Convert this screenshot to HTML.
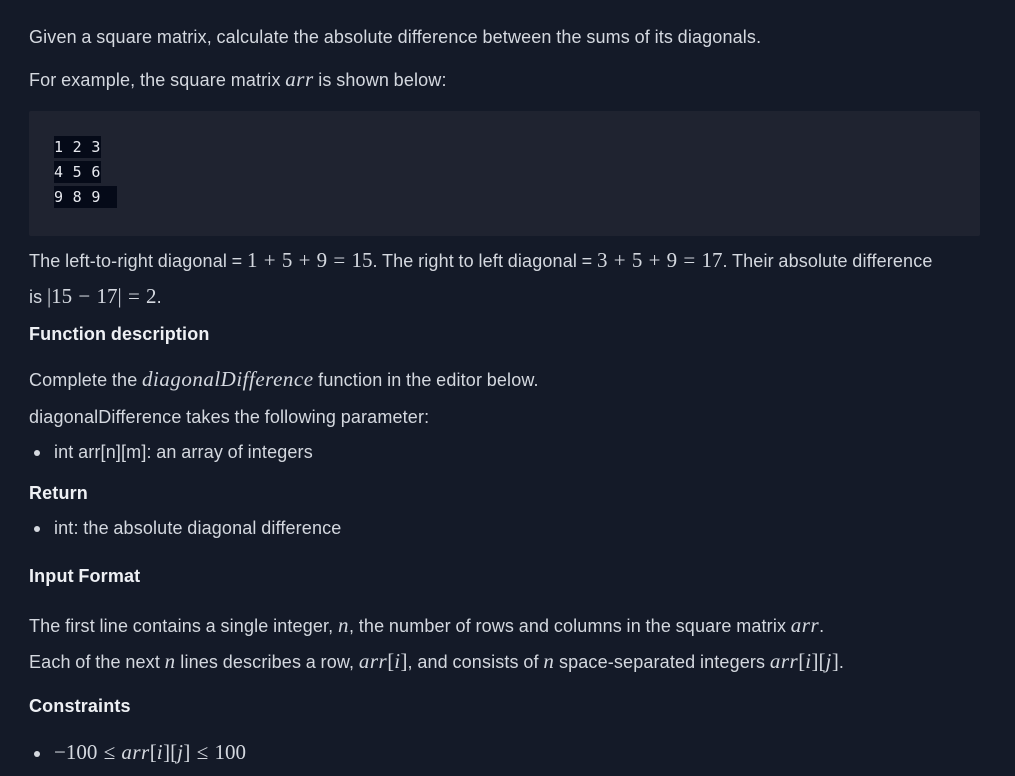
<!DOCTYPE html>
<html><head><meta charset="utf-8"><style>
body{margin:0;background:#141a28;width:1015px;height:776px;overflow:hidden;font-family:"Liberation Sans",sans-serif;color:#d4d8df;font-size:18px}
.l{position:absolute;left:29px;white-space:nowrap;letter-spacing:0.15px;word-spacing:-0.5px}
.m{font-family:"Liberation Serif",serif;font-size:21px;letter-spacing:0;word-spacing:1px}
.i{font-family:"Liberation Serif",serif;font-style:italic;font-size:21px;letter-spacing:0.5px}
b{color:#eef0f4;font-weight:bold}
.code{position:absolute;left:29px;top:111px;width:951px;height:125px;background:#1f2330;border-radius:2px}
.c{position:absolute;left:54px;background:#050a18;font-family:"DejaVu Sans Mono",monospace;font-size:15px;color:#e8eaf0;height:22px;line-height:22px;letter-spacing:0.3px}
.dot{position:absolute;left:34px;width:6px;height:6px;border-radius:50%;background:#d4d8df}
</style></head><body>
<div class="l" style="top:27px">Given a square matrix, calculate the absolute difference between the sums of its diagonals.</div>
<div class="l" style="top:67px">For example, the square matrix <span class="i">arr</span> is shown below:</div>
<div class="code"></div>
<div class="c" style="top:136px;width:47px">1 2 3</div>
<div class="c" style="top:161px;width:47px">4 5 6</div>
<div class="c" style="top:186px;width:63px">9 8 9</div>
<div class="l" style="top:248px">The left-to-right diagonal = <span class="m">1 + 5 + 9 = 15</span>. The right to left diagonal = <span class="m">3 + 5 + 9 = 17</span>. Their absolute difference</div>
<div class="l" style="top:284px">is <span class="m">|15 − 17| = 2</span>.</div>
<div class="l" style="top:324px"><b>Function description</b></div>
<div class="l" style="top:367px">Complete the <span class="i">diagonalDifference</span> function in the editor below.</div>
<div class="l" style="top:407px">diagonalDifference takes the following parameter:</div>
<div class="dot" style="top:450px"></div><div class="l" style="top:442px;left:54px">int arr[n][m]: an array of integers</div>
<div class="l" style="top:483px"><b>Return</b></div>
<div class="dot" style="top:526px"></div><div class="l" style="top:518px;left:54px">int: the absolute diagonal difference</div>
<div class="l" style="top:566px"><b>Input Format</b></div>
<div class="l" style="top:613px">The first line contains a single integer, <span class="i">n</span>, the number of rows and columns in the square matrix <span class="i">arr</span>.</div>
<div class="l" style="top:649px">Each of the next <span class="i">n</span> lines describes a row, <span class="i">arr</span><span class="m">[</span><span class="i">i</span><span class="m">]</span>, and consists of <span class="i">n</span> space-separated integers <span class="i">arr</span><span class="m">[</span><span class="i">i</span><span class="m">][</span><span class="i">j</span><span class="m">]</span>.</div>
<div class="l" style="top:696px"><b>Constraints</b></div>
<div class="dot" style="top:751px"></div><div class="l" style="top:740px;left:54px"><span class="m">−100 ≤ </span><span class="i">arr</span><span class="m">[</span><span class="i">i</span><span class="m">][</span><span class="i">j</span><span class="m">] ≤ 100</span></div>
</body></html>
